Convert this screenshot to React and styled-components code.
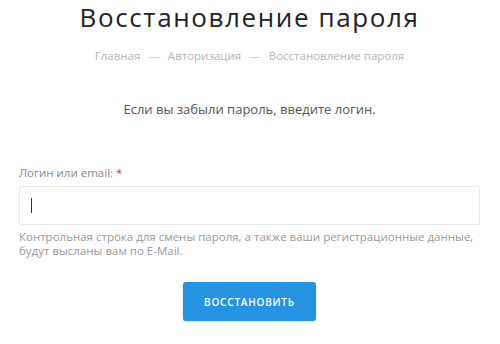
import React from "react";
import styled, { createGlobalStyle } from "styled-components";

const Global = createGlobalStyle`
  html, body { margin: 0; padding: 0; background: #fff; }
  body { font-family: "Open Sans", "DejaVu Sans", sans-serif; }
`;

const Page = styled.div`
  width: 500px;
  height: 344px;
  box-sizing: border-box;
  padding: 0 20px 0 19px;
  display: flex;
  flex-direction: column;
  overflow: hidden;
`;

const Title = styled.h1`
  margin: 0;
  padding-top: 1px;
  font-family: "Open Sans", sans-serif;
  font-weight: 400;
  font-size: 26px;
  line-height: 32px;
  color: #222;
  text-align: center;
  letter-spacing: 1.6px;
`;

const Crumbs = styled.nav`
  margin-top: 15px;
  display: flex;
  justify-content: center;
  gap: 8px;
  font-size: 11.5px;
  line-height: 16px;
  color: #b4b4b4;
`;

const Sep = styled.span`
  color: #cfcfcf;
`;

const Intro = styled.p`
  margin: 36px 0 0;
  text-align: center;
  font-size: 13px;
  line-height: 18px;
  color: #555;
`;

const Label = styled.label`
  margin-top: 48px;
  font-size: 11.5px;
  line-height: 14px;
  color: #888;
`;

const Star = styled.span`
  color: #e0262f;
`;

const Input = styled.div`
  margin-top: 6px;
  height: 39px;
  box-sizing: border-box;
  border: 1px solid #e8e8e8;
  border-radius: 2px;
  display: flex;
  align-items: center;
  padding-left: 11px;
`;

const Caret = styled.span`
  width: 1px;
  height: 15px;
  background: #333;
`;

const Hint = styled.p`
  margin: 5px 0 0;
  font-size: 11.5px;
  line-height: 14px;
  color: #999;
`;

const Actions = styled.div`
  margin-top: 24px;
  display: flex;
  justify-content: center;
`;

const Button = styled.button`
  width: 133px;
  height: 39px;
  border: none;
  border-radius: 3px;
  background: #2593e1;
  color: #fff;
  font-family: "Open Sans", sans-serif;
  font-size: 10px;
  font-weight: 600;
  letter-spacing: 0.8px;
  text-transform: uppercase;
  box-shadow: 0 1px 2px rgba(0,0,0,0.15);
`;

export default function App() {
  return (
    <>
      <Global />
      <Page>
        <Title>Восстановление пароля</Title>
        <Crumbs>
          <span>Главная</span>
          <Sep>—</Sep>
          <span>Авторизация</span>
          <Sep>—</Sep>
          <span>Восстановление пароля</span>
        </Crumbs>
        <Intro>Если вы забыли пароль, введите логин.</Intro>
        <Label>
          Логин или email: <Star>*</Star>
        </Label>
        <Input>
          <Caret />
        </Input>
        <Hint>
          Контрольная строка для смены пароля, а также ваши регистрационные данные,
          <br />
          будут высланы вам по E-Mail.
        </Hint>
        <Actions>
          <Button>Восстановить</Button>
        </Actions>
      </Page>
    </>
  );
}
